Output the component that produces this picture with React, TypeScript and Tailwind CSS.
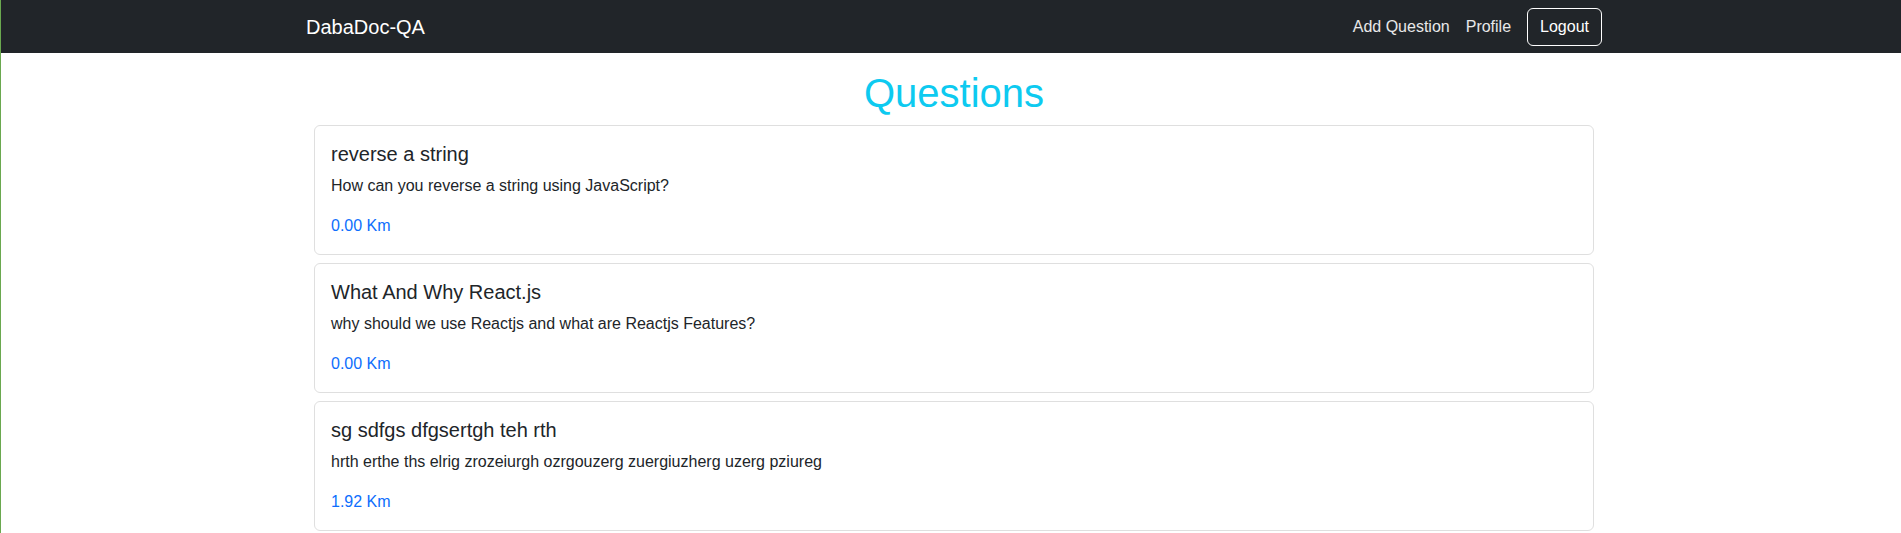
const questions = [
  {
    title: "reverse a string",
    body: "How can you reverse a string using JavaScript?",
    distance: "0.00 Km",
  },
  {
    title: "What And Why React.js",
    body: "why should we use Reactjs and what are Reactjs Features?",
    distance: "0.00 Km",
  },
  {
    title: "sg sdfgs dfgsertgh teh rth",
    body: "hrth erthe ths elrig zrozeiurgh ozrgouzerg zuergiuzherg uzerg pziureg",
    distance: "1.92 Km",
  },
];

export default function App() {
  return (
    <div className="min-h-screen border-l border-[#6aa84f] bg-white font-['Liberation_Sans',Arial,sans-serif] text-[#212529]">
      {/* top bar */}
      <nav className="h-[53px] bg-[#212529]">
        <div className="ml-[305px] flex h-full w-[1296px] items-center justify-between">
          <a href="#" className="text-[20px] leading-[30px] text-white">
            DabaDoc-QA
          </a>
          <div className="flex items-center">
            <a href="#" className="px-2 text-base leading-6 text-white/90">
              Add Question
            </a>
            <a href="#" className="px-2 text-base leading-6 text-white/90">
              Profile
            </a>
            <button className="ml-2 h-[38px] rounded-md border border-white px-3 text-base leading-6 text-white">
              Logout
            </button>
          </div>
        </div>
      </nav>

      <main className="ml-[305px] w-[1296px]">
        <h1 className="mt-4 mb-2 text-center text-[40px] leading-[48px] font-medium text-[#0dcaf0]">
          Questions
        </h1>
        {questions.map((q) => (
          <div
            key={q.title}
            className="mx-2 mb-2 rounded-md border border-[#dfdfdf] p-4"
          >
            <h5 className="mb-2 text-[20px] leading-[24px] font-medium">{q.title}</h5>
            <p className="mb-4 text-base leading-6">{q.body}</p>
            <a href="#" className="block text-base leading-6 text-[#0d6efd]">
              {q.distance}
            </a>
          </div>
        ))}
      </main>
    </div>
  );
}
